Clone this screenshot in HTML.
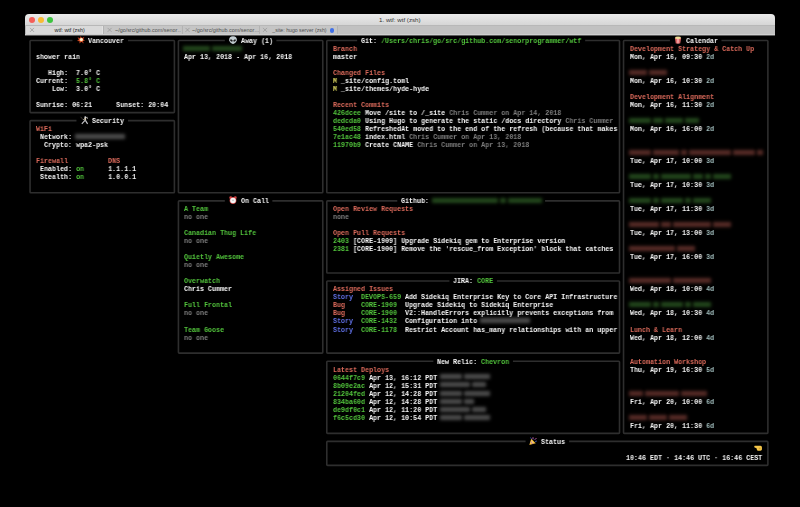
<!DOCTYPE html>
<html><head><meta charset="utf-8">
<style>
html,body{margin:0;padding:0;background:#000;width:800px;height:507px;overflow:hidden;position:relative}
.t{position:absolute;white-space:pre;font-family:"Liberation Mono",monospace;font-size:7.4px;font-weight:bold;line-height:8.017px;height:8.017px;transform:scale(0.90315,1.040);transform-origin:0 0;color:#ececec}
.b{position:absolute;background:#2e2e2e}
.bt{filter:blur(1.6px)}
.sm{position:absolute;height:5px}
.em{position:absolute;overflow:visible}
.t{will-change:transform}
#chrome{position:absolute;left:25px;top:14px;width:750px;height:22px}
#titlebar{position:absolute;left:0;top:0;width:750px;height:11px;background:linear-gradient(#ebebeb,#d6d6d6);border-radius:4px 4px 0 0}
#tabbar{position:absolute;left:0;top:11px;width:750px;height:10px;background:#c4c4c4;border-top:1px solid #b8b8b8;border-bottom:1px solid #cfcfcf;box-sizing:border-box}
.light{position:absolute;top:3px;width:6px;height:6px;border-radius:50%}
.tab{position:absolute;top:12px;height:8px;background:#c5c5c5;border-left:1px solid #b3b3b3;box-sizing:border-box;font-family:"Liberation Sans",sans-serif;font-size:5.4px;line-height:8px;color:#505050;white-space:pre;overflow:hidden}
.tab .x{position:absolute;left:4px;top:0;color:#8a8a8a;font-size:6px}
.tab .lbl{position:absolute;top:0}
</style></head><body>
<div id="chrome">
<div id="titlebar"></div>
<div class="light" style="left:4px;background:#f45e58"></div>
<div class="light" style="left:13px;background:#f8bb33"></div>
<div class="light" style="left:22px;background:#3cc43f"></div>
<div style="position:absolute;left:354px;top:0.4px;height:11px;line-height:11px;font-family:'Liberation Sans',sans-serif;font-size:6.2px;color:#333;white-space:pre">1. wtf: wtf (zsh)</div>
<div id="tabbar"></div>
<div class="tab" style="left:0;width:78px;background:#d9d9d9;border-right:1px solid #e2e2e2"><span class="lbl" style="left:28.5px;color:#222">wtf: wtf (zsh)</span></div>
<div class="tab" style="left:78px;width:78px"><span class="lbl" style="left:11px">~/go/src/github.com/senor…</span></div>
<div class="tab" style="left:157px;width:77px"><span class="lbl" style="left:9px">~/go/src/github.com/senor…</span></div>
<div class="tab" style="left:234px;width:78px"><span class="lbl" style="left:12.3px;font-size:5.2px">_site: hugo server (zsh)</span><span style="position:absolute;left:69.6px;top:2.2px;width:4.4px;height:4.4px;border-radius:50%;background:#3f6fe8"></span></div>
<div class="tab" style="left:312px;width:438px;background:#c1c1c1;border-left:1px solid #b3b3b3"></div>
<svg style="position:absolute;left:0;top:0" width="750" height="22"><g stroke="#8c8c8c" stroke-width="0.6">
<path d="M5,3 L9,7 M9,3 L5,7" transform="translate(0,10.9)"/>
<path d="M5,3 L9,7 M9,3 L5,7" transform="translate(77.6,10.9)"/>
<path d="M5,3 L9,7 M9,3 L5,7" transform="translate(155.5,10.9)"/>
<path d="M5,3 L9,7 M9,3 L5,7" transform="translate(233,10.9)"/>
</g></svg>
<div style="position:absolute;left:0;top:21px;width:750px;height:1px;background:#5c5c5c"></div>
</div>
<svg style="position:absolute;left:0;top:0" width="800" height="507"><g fill="none" stroke="#2e2e2e" stroke-width="1.6"><path d="M128.00,40.50 H173.61 Q174.41,40.50 174.41,41.30 V111.85 Q174.41,112.65 173.61,112.65 H30.85 Q30.05,112.65 30.05,111.85 V41.30 Q30.05,40.50 30.85,40.50 H72.46"/>
<path d="M128.00,120.67 H173.61 Q174.41,120.67 174.41,121.47 V192.02 Q174.41,192.82 173.61,192.82 H30.85 Q30.05,192.82 30.05,192.02 V121.47 Q30.05,120.67 30.85,120.67 H76.47"/>
<path d="M276.37,40.50 H321.98 Q322.78,40.50 322.78,41.30 V192.02 Q322.78,192.82 321.98,192.82 H179.22 Q178.42,192.82 178.42,192.02 V41.30 Q178.42,40.50 179.22,40.50 H224.84"/>
<path d="M272.36,200.84 H321.98 Q322.78,200.84 322.78,201.64 V352.36 Q322.78,353.16 321.98,353.16 H179.22 Q178.42,353.16 178.42,352.36 V201.64 Q178.42,200.84 179.22,200.84 H224.84"/>
<path d="M585.14,40.50 H618.72 Q619.52,40.50 619.52,41.30 V192.02 Q619.52,192.82 618.72,192.82 H327.59 Q326.79,192.82 326.79,192.02 V41.30 Q326.79,40.50 327.59,40.50 H357.17"/>
<path d="M545.04,200.84 H618.72 Q619.52,200.84 619.52,201.64 V272.19 Q619.52,272.99 618.72,272.99 H327.59 Q326.79,272.99 326.79,272.19 V201.64 Q326.79,200.84 327.59,200.84 H397.27"/>
<path d="M496.92,281.01 H618.72 Q619.52,281.01 619.52,281.81 V352.36 Q619.52,353.16 618.72,353.16 H327.59 Q326.79,353.16 326.79,352.36 V281.81 Q326.79,281.01 327.59,281.01 H449.40"/>
<path d="M512.96,361.18 H618.72 Q619.52,361.18 619.52,361.98 V432.53 Q619.52,433.33 618.72,433.33 H327.59 Q326.79,433.33 326.79,432.53 V361.98 Q326.79,361.18 327.59,361.18 H433.36"/>
<path d="M721.48,40.50 H767.09 Q767.89,40.50 767.89,41.30 V432.53 Q767.89,433.33 767.09,433.33 H624.33 Q623.53,433.33 623.53,432.53 V41.30 Q623.53,40.50 624.33,40.50 H669.95"/>
<path d="M569.10,441.35 H767.09 Q767.89,441.35 767.89,442.15 V464.60 Q767.89,465.40 767.09,465.40 H327.59 Q326.79,465.40 326.79,464.60 V442.15 Q326.79,441.35 327.59,441.35 H525.59"/></g></svg>
<div class="t" style="left:88.20px;top:36.89px"><span style="color:#f6f6f6">Vancouver</span></div>
<div class="t" style="left:92.21px;top:117.06px"><span style="color:#f6f6f6">Security</span></div>
<div class="t" style="left:240.58px;top:36.89px"><span style="color:#f6f6f6">Away (1)</span></div>
<div class="t" style="left:240.58px;top:197.23px"><span style="color:#f6f6f6">On Call</span></div>
<div class="t" style="left:360.88px;top:36.89px"><span style="color:#f6f6f6">Git: </span><span style="color:#52c43c">/Users/chris/go/src/github.com/senorprogrammer/wtf</span></div>
<div class="t" style="left:400.98px;top:197.23px"><span style="color:#f6f6f6">Github: </span><span style="color:#52c43c">                           </span></div>
<div class="t" style="left:453.11px;top:277.40px"><span style="color:#f6f6f6">JIRA: </span><span style="color:#52c43c">CORE</span></div>
<div class="t" style="left:437.07px;top:357.57px"><span style="color:#f6f6f6">New Relic: </span><span style="color:#52c43c">Chevron</span></div>
<div class="t" style="left:685.69px;top:36.89px"><span style="color:#f6f6f6">Calendar</span></div>
<div class="t" style="left:541.33px;top:437.74px"><span style="color:#f6f6f6">Status</span></div>
<div class="t" style="left:36.07px;top:52.92px"><span style="color:#f6f6f6">shower rain</span></div>
<div class="t" style="left:36.07px;top:68.96px"><span style="color:#f6f6f6">   High:  7.0° C</span></div>
<div class="t" style="left:36.07px;top:76.97px"><span style="color:#f6f6f6">Current:  </span><span style="color:#52c43c">5.8° C</span></div>
<div class="t" style="left:36.07px;top:84.99px"><span style="color:#f6f6f6">    Low:  3.0° C</span></div>
<div class="t" style="left:36.07px;top:101.03px"><span style="color:#f6f6f6">Sunrise: 06:21      Sunset: 20:04</span></div>
<div class="t" style="left:36.07px;top:125.08px"><span style="color:#db6a5b">WiFi</span></div>
<div class="t" style="left:40.08px;top:133.09px"><span style="color:#f6f6f6">Network:</span></div>
<div class="t" style="left:44.09px;top:141.11px"><span style="color:#f6f6f6">Crypto: wpa2-psk</span></div>
<div class="t" style="left:36.07px;top:157.14px"><span style="color:#db6a5b">Firewall</span><span style="color:#f6f6f6">          </span><span style="color:#db6a5b">DNS</span></div>
<div class="t" style="left:40.08px;top:165.16px"><span style="color:#f6f6f6">Enabled: </span><span style="color:#52c43c">on</span><span style="color:#f6f6f6">      1.1.1.1</span></div>
<div class="t" style="left:40.08px;top:173.18px"><span style="color:#f6f6f6">Stealth: </span><span style="color:#52c43c">on</span><span style="color:#f6f6f6">      1.0.0.1</span></div>
<div class="t" style="left:184.44px;top:52.92px"><span style="color:#f6f6f6">Apr 13, 2018 - Apr 16, 2018</span></div>
<div class="t" style="left:184.44px;top:205.25px"><span style="color:#52c43c">A Team</span></div>
<div class="t" style="left:184.44px;top:213.26px"><span style="color:#7e7e7e">no one</span></div>
<div class="t" style="left:184.44px;top:229.30px"><span style="color:#52c43c">Canadian Thug Life</span></div>
<div class="t" style="left:184.44px;top:237.31px"><span style="color:#7e7e7e">no one</span></div>
<div class="t" style="left:184.44px;top:253.35px"><span style="color:#52c43c">Quietly Awesome</span></div>
<div class="t" style="left:184.44px;top:261.37px"><span style="color:#7e7e7e">no one</span></div>
<div class="t" style="left:184.44px;top:277.40px"><span style="color:#52c43c">Overwatch</span></div>
<div class="t" style="left:184.44px;top:285.42px"><span style="color:#f6f6f6">Chris Cummer</span></div>
<div class="t" style="left:184.44px;top:301.45px"><span style="color:#52c43c">Full Frontal</span></div>
<div class="t" style="left:184.44px;top:309.47px"><span style="color:#7e7e7e">no one</span></div>
<div class="t" style="left:184.44px;top:325.50px"><span style="color:#52c43c">Team Goose</span></div>
<div class="t" style="left:184.44px;top:333.52px"><span style="color:#7e7e7e">no one</span></div>
<div class="t" style="left:332.81px;top:44.91px"><span style="color:#db6a5b">Branch</span></div>
<div class="t" style="left:332.81px;top:52.92px"><span style="color:#f6f6f6">master</span></div>
<div class="t" style="left:332.81px;top:68.96px"><span style="color:#db6a5b">Changed Files</span></div>
<div class="t" style="left:332.81px;top:76.97px"><span style="color:#d4cf5e">M</span><span style="color:#f6f6f6"> _site/config.toml</span></div>
<div class="t" style="left:332.81px;top:84.99px"><span style="color:#d4cf5e">M</span><span style="color:#f6f6f6"> _site/themes/hyde-hyde</span></div>
<div class="t" style="left:332.81px;top:101.03px"><span style="color:#db6a5b">Recent Commits</span></div>
<div class="t" style="left:332.81px;top:109.04px"><span style="color:#52c43c">426dcee</span><span style="color:#f6f6f6"> Move /site to /_site </span><span style="color:#7e7e7e">Chris Cummer on Apr 14, 2018</span></div>
<div class="t" style="left:332.81px;top:117.06px"><span style="color:#52c43c">dedcda0</span><span style="color:#f6f6f6"> Using Hugo to generate the static /docs directory </span><span style="color:#7e7e7e">Chris Cummer</span></div>
<div class="t" style="left:332.81px;top:125.08px"><span style="color:#52c43c">540ed58</span><span style="color:#f6f6f6"> RefreshedAt moved to the end of the refresh (because that makes</span></div>
<div class="t" style="left:332.81px;top:133.09px"><span style="color:#52c43c">7e1ac48</span><span style="color:#f6f6f6"> index.html </span><span style="color:#7e7e7e">Chris Cummer on Apr 13, 2018</span></div>
<div class="t" style="left:332.81px;top:141.11px"><span style="color:#52c43c">11970b9</span><span style="color:#f6f6f6"> Create CNAME </span><span style="color:#7e7e7e">Chris Cummer on Apr 13, 2018</span></div>
<div class="t" style="left:332.81px;top:205.25px"><span style="color:#db6a5b">Open Review Requests</span></div>
<div class="t" style="left:332.81px;top:213.26px"><span style="color:#7e7e7e">none</span></div>
<div class="t" style="left:332.81px;top:229.30px"><span style="color:#db6a5b">Open Pull Requests</span></div>
<div class="t" style="left:332.81px;top:237.31px"><span style="color:#52c43c">2403</span><span style="color:#f6f6f6"> [CORE-1909] Upgrade Sidekiq gem to Enterprise version</span></div>
<div class="t" style="left:332.81px;top:245.33px"><span style="color:#52c43c">2381</span><span style="color:#f6f6f6"> [CORE-1900] Remove the 'rescue_from Exception' block that catches</span></div>
<div class="t" style="left:332.81px;top:285.42px"><span style="color:#db6a5b">Assigned Issues</span></div>
<div class="t" style="left:332.81px;top:293.43px"><span style="color:#6070e6">Story</span></div>
<div class="t" style="left:360.88px;top:293.43px"><span style="color:#52c43c">DEVOPS-659</span></div>
<div class="t" style="left:404.99px;top:293.43px"><span style="color:#f6f6f6">Add Sidekiq Enterprise Key to Core API Infrastructure</span></div>
<div class="t" style="left:332.81px;top:301.45px"><span style="color:#db6a5b">Bug</span></div>
<div class="t" style="left:360.88px;top:301.45px"><span style="color:#52c43c">CORE-1909</span></div>
<div class="t" style="left:404.99px;top:301.45px"><span style="color:#f6f6f6">Upgrade Sidekiq to Sidekiq Enterprise</span></div>
<div class="t" style="left:332.81px;top:309.47px"><span style="color:#db6a5b">Bug</span></div>
<div class="t" style="left:360.88px;top:309.47px"><span style="color:#52c43c">CORE-1900</span></div>
<div class="t" style="left:404.99px;top:309.47px"><span style="color:#f6f6f6">V2::HandleErrors explicitly prevents exceptions from</span></div>
<div class="t" style="left:332.81px;top:317.48px"><span style="color:#6070e6">Story</span></div>
<div class="t" style="left:360.88px;top:317.48px"><span style="color:#52c43c">CORE-1432</span></div>
<div class="t" style="left:404.99px;top:317.48px"><span style="color:#f6f6f6">Configuration into</span></div>
<div class="t" style="left:332.81px;top:325.50px"><span style="color:#6070e6">Story</span></div>
<div class="t" style="left:360.88px;top:325.50px"><span style="color:#52c43c">CORE-1178</span></div>
<div class="t" style="left:404.99px;top:325.50px"><span style="color:#f6f6f6">Restrict Account has_many relationships with an upper</span></div>
<div class="t" style="left:332.81px;top:365.59px"><span style="color:#db6a5b">Latest Deploys</span></div>
<div class="t" style="left:332.81px;top:373.60px"><span style="color:#52c43c">0644f7c9</span><span style="color:#f6f6f6"> Apr 13, 16:12 PDT</span></div>
<div class="t" style="left:332.81px;top:381.62px"><span style="color:#52c43c">8b09e2ac</span><span style="color:#f6f6f6"> Apr 12, 15:31 PDT</span></div>
<div class="t" style="left:332.81px;top:389.64px"><span style="color:#52c43c">21204fed</span><span style="color:#f6f6f6"> Apr 12, 14:28 PDT</span></div>
<div class="t" style="left:332.81px;top:397.65px"><span style="color:#52c43c">834ba60d</span><span style="color:#f6f6f6"> Apr 12, 14:28 PDT</span></div>
<div class="t" style="left:332.81px;top:405.67px"><span style="color:#52c43c">de9df0c1</span><span style="color:#f6f6f6"> Apr 12, 11:20 PDT</span></div>
<div class="t" style="left:332.81px;top:413.69px"><span style="color:#52c43c">f6c5cd30</span><span style="color:#f6f6f6"> Apr 12, 10:54 PDT</span></div>
<div class="t" style="left:629.55px;top:44.91px"><span style="color:#db6a5b">Development Strategy &amp; Catch Up</span></div>
<div class="t" style="left:629.55px;top:52.92px"><span style="color:#f6f6f6">Mon, Apr 16, 09:30 </span><span style="color:#a0bcbc">2d</span></div>
<div class="t" style="left:629.55px;top:76.97px"><span style="color:#f6f6f6">Mon, Apr 16, 10:30 </span><span style="color:#a0bcbc">2d</span></div>
<div class="t" style="left:629.55px;top:93.01px"><span style="color:#db6a5b">Development Alignment</span></div>
<div class="t" style="left:629.55px;top:101.03px"><span style="color:#f6f6f6">Mon, Apr 16, 11:30 </span><span style="color:#a0bcbc">2d</span></div>
<div class="t" style="left:629.55px;top:125.08px"><span style="color:#f6f6f6">Mon, Apr 16, 16:00 </span><span style="color:#a0bcbc">2d</span></div>
<div class="t" style="left:629.55px;top:157.14px"><span style="color:#f6f6f6">Tue, Apr 17, 10:00 </span><span style="color:#a0bcbc">3d</span></div>
<div class="t" style="left:629.55px;top:181.20px"><span style="color:#f6f6f6">Tue, Apr 17, 10:30 </span><span style="color:#a0bcbc">3d</span></div>
<div class="t" style="left:629.55px;top:205.25px"><span style="color:#f6f6f6">Tue, Apr 17, 11:30 </span><span style="color:#a0bcbc">3d</span></div>
<div class="t" style="left:629.55px;top:229.30px"><span style="color:#f6f6f6">Tue, Apr 17, 13:00 </span><span style="color:#a0bcbc">3d</span></div>
<div class="t" style="left:629.55px;top:253.35px"><span style="color:#f6f6f6">Tue, Apr 17, 16:00 </span><span style="color:#a0bcbc">3d</span></div>
<div class="t" style="left:629.55px;top:285.42px"><span style="color:#f6f6f6">Wed, Apr 18, 10:00 </span><span style="color:#a0bcbc">4d</span></div>
<div class="t" style="left:629.55px;top:309.47px"><span style="color:#f6f6f6">Wed, Apr 18, 10:30 </span><span style="color:#a0bcbc">4d</span></div>
<div class="t" style="left:629.55px;top:325.50px"><span style="color:#db6a5b">Lunch &amp; Learn</span></div>
<div class="t" style="left:629.55px;top:333.52px"><span style="color:#f6f6f6">Wed, Apr 18, 12:00 </span><span style="color:#a0bcbc">4d</span></div>
<div class="t" style="left:629.55px;top:357.57px"><span style="color:#db6a5b">Automation Workshop</span></div>
<div class="t" style="left:629.55px;top:365.59px"><span style="color:#f6f6f6">Thu, Apr 19, 16:30 </span><span style="color:#a0bcbc">5d</span></div>
<div class="t" style="left:629.55px;top:397.65px"><span style="color:#f6f6f6">Fri, Apr 20, 10:00 </span><span style="color:#a0bcbc">6d</span></div>
<div class="t" style="left:629.55px;top:421.71px"><span style="color:#f6f6f6">Fri, Apr 20, 11:30 </span><span style="color:#a0bcbc">6d</span></div>
<div class="t" style="left:625.54px;top:453.77px"><span style="color:#f6f6f6">10:46 EDT · 14:46 UTC · 16:46 CEST</span></div>
<svg class="em" style="left:76.57px;top:36.00px" width="8" height="8" viewBox="0 0 8 8"><polygon points="3.6,0 4.8,2.2 7.4,0.8 6.2,3.2 8,4.4 5.8,5 6.8,7.6 4.4,5.8 2.4,7.4 2.6,5.2 0,5 1.8,3.4 0.6,1.2 3,2.2" fill="#c8401f"/><polygon points="4.2,1.4 5.6,2.8 6.6,4.2 5.2,5 4.2,6 3,5.2 1.8,4.2 2.8,2.8" fill="#e8703a"/><circle cx="4.4" cy="3.4" r="1.5" fill="#fff4d0"/></svg><svg class="em" style="left:80.18px;top:115.77px" width="8" height="8" viewBox="0 0 8 8"><path d="M0.6,0.8 L3.2,3.8" stroke="#5a5048" stroke-width="0.7"/><path d="M3,3.9 L5,2.6 M5.6,2 L7.2,1.2 L7.4,3" stroke="#b0aca8" stroke-width="0.8" fill="none"/><circle cx="5.3" cy="1.3" r="1" fill="#d8d8d8"/><path d="M5.2,2 L5.3,4.6" stroke="#d8ccb0" stroke-width="1.6"/><path d="M5,4.4 L1.8,7.8 M5.4,4.4 L7.6,7.8" stroke="#c4c4c8" stroke-width="1.2" fill="none"/></svg><svg class="em" style="left:228.55px;top:36.30px" width="8" height="8" viewBox="0 0 8 8"><path d="M4,0.3 C6.8,0.3 7.9,2 7.9,3.9 C7.9,5.6 5.2,7.9 4,7.9 C2.8,7.9 0.1,5.6 0.1,3.9 C0.1,2 1.2,0.3 4,0.3Z" fill="#c4ced2"/><ellipse cx="2.4" cy="4.5" rx="1.4" ry="1.0" transform="rotate(30 2.4 4.5)" fill="#1c1c1c"/><ellipse cx="5.6" cy="4.5" rx="1.4" ry="1.0" transform="rotate(-30 5.6 4.5)" fill="#1c1c1c"/></svg><svg class="em" style="left:228.55px;top:196.04px" width="8" height="8" viewBox="0 0 8 8"><circle cx="1.7" cy="1.7" r="1.4" fill="#d04444"/><circle cx="6.3" cy="1.7" r="1.4" fill="#d04444"/><circle cx="4" cy="4.5" r="3.4" fill="#d04444"/><circle cx="4" cy="4.5" r="2.8" fill="#f4f4f4"/><path d="M2.9,3.7 L4,4.7 L5.1,3.7" stroke="#888" stroke-width="0.5" fill="none"/></svg><svg class="em" style="left:673.66px;top:36.30px" width="8" height="8" viewBox="0 0 8 8"><path d="M0.9,2.1 L7.1,2.1 L6.2,7.6 L1.8,7.6Z" fill="#dc6464"/><path d="M2.8,2.1 L3.2,7.6 L4.8,7.6 L5.2,2.1Z" fill="#f0a0a0"/><ellipse cx="4" cy="1.8" rx="3" ry="1.2" fill="#eedd98"/></svg><svg class="em" style="left:529.30px;top:436.85px" width="8" height="8" viewBox="0 0 8 8"><path d="M0.3,8 L2.2,1.8 L6.8,6.2Z" fill="#f0b838"/><path d="M1.2,6.8 L2.4,3 L5.2,5.6Z" fill="#f8d060"/><circle cx="2.4" cy="5.2" r="0.6" fill="#b46ad0"/><circle cx="3.4" cy="6.6" r="0.5" fill="#b46ad0"/><path d="M1.5,0.5 L2.5,2 M4,0.3 L4,2.5 M7.5,1 L5.5,3 M8,4 L6,4.5" stroke="#3a4fa8" stroke-width="0.9"/><path d="M4,0.3 L4,2 M7.5,1 L6,2.6" stroke="#b03a5a" stroke-width="0.9"/></svg><svg class="em" style="left:753.66px;top:445.37px" width="8" height="6" viewBox="0 0 8 6.4"><path d="M0.6,0.9 L6.6,0.7 C7.6,0.7 8.2,1.5 8.2,2.6 L8.2,4.6 C8.2,5.5 7.5,6.1 6.6,6.1 L4.2,6.1 C3.4,6.1 2.9,5.2 2.6,4.2 L2.2,3.1 L0.8,2.9 C0.2,2.8 0,2.4 0,1.9 C0,1.3 0.2,0.9 0.6,0.9Z" fill="#f4c64a"/><ellipse cx="5.8" cy="3.5" rx="1" ry="0.9" fill="#d9a232"/></svg>
<div class="sm" style="left:-567.94px;top:198.09px;width:66.16px;box-shadow:1000px 0 3.6px 0 #24491d"></div>
<div class="sm" style="left:-499.77px;top:198.09px;width:6.01px;box-shadow:1000px 0 3.6px 0 #24491d"></div>
<div class="sm" style="left:-491.75px;top:198.09px;width:34.08px;box-shadow:1000px 0 3.6px 0 #24491d"></div>
<div class="sm" style="left:-924.83px;top:133.95px;width:50.12px;box-shadow:1000px 0 3.6px 0 #4f4f4f"></div>
<div class="sm" style="left:-816.56px;top:45.77px;width:26.06px;box-shadow:1000px 0 3.6px 0 #24491d"></div>
<div class="sm" style="left:-788.49px;top:45.77px;width:30.07px;box-shadow:1000px 0 3.6px 0 #24491d"></div>
<div class="sm" style="left:-519.82px;top:318.34px;width:50.12px;box-shadow:1000px 0 3.6px 0 #4f4f4f"></div>
<div class="sm" style="left:-559.92px;top:374.46px;width:22.05px;box-shadow:1000px 0 3.6px 0 #4f4f4f"></div>
<div class="sm" style="left:-535.86px;top:374.46px;width:26.06px;box-shadow:1000px 0 3.6px 0 #4f4f4f"></div>
<div class="sm" style="left:-559.92px;top:382.48px;width:30.07px;box-shadow:1000px 0 3.6px 0 #4f4f4f"></div>
<div class="sm" style="left:-527.84px;top:382.48px;width:14.03px;box-shadow:1000px 0 3.6px 0 #4f4f4f"></div>
<div class="sm" style="left:-559.92px;top:390.50px;width:22.05px;box-shadow:1000px 0 3.6px 0 #4f4f4f"></div>
<div class="sm" style="left:-535.86px;top:390.50px;width:26.06px;box-shadow:1000px 0 3.6px 0 #4f4f4f"></div>
<div class="sm" style="left:-559.92px;top:398.51px;width:22.05px;box-shadow:1000px 0 3.6px 0 #4f4f4f"></div>
<div class="sm" style="left:-535.86px;top:398.51px;width:10.02px;box-shadow:1000px 0 3.6px 0 #4f4f4f"></div>
<div class="sm" style="left:-559.92px;top:406.53px;width:30.07px;box-shadow:1000px 0 3.6px 0 #4f4f4f"></div>
<div class="sm" style="left:-527.84px;top:406.53px;width:14.03px;box-shadow:1000px 0 3.6px 0 #4f4f4f"></div>
<div class="sm" style="left:-559.92px;top:414.55px;width:22.05px;box-shadow:1000px 0 3.6px 0 #4f4f4f"></div>
<div class="sm" style="left:-535.86px;top:414.55px;width:26.06px;box-shadow:1000px 0 3.6px 0 #4f4f4f"></div>
<div class="sm" style="left:-371.45px;top:69.82px;width:18.04px;box-shadow:1000px 0 3.6px 0 #5a2d28"></div>
<div class="sm" style="left:-351.40px;top:69.82px;width:18.04px;box-shadow:1000px 0 3.6px 0 #5a2d28"></div>
<div class="sm" style="left:-371.45px;top:117.92px;width:22.05px;box-shadow:1000px 0 3.6px 0 #24491d"></div>
<div class="sm" style="left:-347.39px;top:117.92px;width:10.02px;box-shadow:1000px 0 3.6px 0 #24491d"></div>
<div class="sm" style="left:-335.36px;top:117.92px;width:18.04px;box-shadow:1000px 0 3.6px 0 #24491d"></div>
<div class="sm" style="left:-315.31px;top:117.92px;width:14.03px;box-shadow:1000px 0 3.6px 0 #24491d"></div>
<div class="sm" style="left:-371.45px;top:149.99px;width:22.05px;box-shadow:1000px 0 3.6px 0 #5a2d28"></div>
<div class="sm" style="left:-347.39px;top:149.99px;width:26.06px;box-shadow:1000px 0 3.6px 0 #5a2d28"></div>
<div class="sm" style="left:-319.32px;top:149.99px;width:6.01px;box-shadow:1000px 0 3.6px 0 #5a2d28"></div>
<div class="sm" style="left:-311.30px;top:149.99px;width:42.10px;box-shadow:1000px 0 3.6px 0 #5a2d28"></div>
<div class="sm" style="left:-267.19px;top:149.99px;width:22.05px;box-shadow:1000px 0 3.6px 0 #5a2d28"></div>
<div class="sm" style="left:-243.13px;top:149.99px;width:6.01px;box-shadow:1000px 0 3.6px 0 #5a2d28"></div>
<div class="sm" style="left:-371.45px;top:174.04px;width:22.05px;box-shadow:1000px 0 3.6px 0 #24491d"></div>
<div class="sm" style="left:-347.39px;top:174.04px;width:6.01px;box-shadow:1000px 0 3.6px 0 #24491d"></div>
<div class="sm" style="left:-339.37px;top:174.04px;width:30.07px;box-shadow:1000px 0 3.6px 0 #24491d"></div>
<div class="sm" style="left:-307.29px;top:174.04px;width:10.02px;box-shadow:1000px 0 3.6px 0 #24491d"></div>
<div class="sm" style="left:-295.26px;top:174.04px;width:6.01px;box-shadow:1000px 0 3.6px 0 #24491d"></div>
<div class="sm" style="left:-287.24px;top:174.04px;width:18.04px;box-shadow:1000px 0 3.6px 0 #24491d"></div>
<div class="sm" style="left:-371.45px;top:198.09px;width:22.05px;box-shadow:1000px 0 3.6px 0 #24491d"></div>
<div class="sm" style="left:-347.39px;top:198.09px;width:6.01px;box-shadow:1000px 0 3.6px 0 #24491d"></div>
<div class="sm" style="left:-339.37px;top:198.09px;width:22.05px;box-shadow:1000px 0 3.6px 0 #24491d"></div>
<div class="sm" style="left:-315.31px;top:198.09px;width:6.01px;box-shadow:1000px 0 3.6px 0 #24491d"></div>
<div class="sm" style="left:-307.29px;top:198.09px;width:18.04px;box-shadow:1000px 0 3.6px 0 #24491d"></div>
<div class="sm" style="left:-371.45px;top:222.14px;width:30.07px;box-shadow:1000px 0 3.6px 0 #5a2d28"></div>
<div class="sm" style="left:-339.37px;top:222.14px;width:10.02px;box-shadow:1000px 0 3.6px 0 #5a2d28"></div>
<div class="sm" style="left:-327.34px;top:222.14px;width:38.09px;box-shadow:1000px 0 3.6px 0 #5a2d28"></div>
<div class="sm" style="left:-287.24px;top:222.14px;width:18.04px;box-shadow:1000px 0 3.6px 0 #5a2d28"></div>
<div class="sm" style="left:-371.45px;top:246.19px;width:46.11px;box-shadow:1000px 0 3.6px 0 #5a2d28"></div>
<div class="sm" style="left:-323.33px;top:246.19px;width:18.04px;box-shadow:1000px 0 3.6px 0 #5a2d28"></div>
<div class="sm" style="left:-371.45px;top:278.26px;width:42.10px;box-shadow:1000px 0 3.6px 0 #5a2d28"></div>
<div class="sm" style="left:-327.34px;top:278.26px;width:38.09px;box-shadow:1000px 0 3.6px 0 #5a2d28"></div>
<div class="sm" style="left:-371.45px;top:302.31px;width:22.05px;box-shadow:1000px 0 3.6px 0 #24491d"></div>
<div class="sm" style="left:-347.39px;top:302.31px;width:6.01px;box-shadow:1000px 0 3.6px 0 #24491d"></div>
<div class="sm" style="left:-339.37px;top:302.31px;width:22.05px;box-shadow:1000px 0 3.6px 0 #24491d"></div>
<div class="sm" style="left:-315.31px;top:302.31px;width:6.01px;box-shadow:1000px 0 3.6px 0 #24491d"></div>
<div class="sm" style="left:-307.29px;top:302.31px;width:18.04px;box-shadow:1000px 0 3.6px 0 #24491d"></div>
<div class="sm" style="left:-371.45px;top:390.50px;width:14.03px;box-shadow:1000px 0 3.6px 0 #5a2d28"></div>
<div class="sm" style="left:-355.41px;top:390.50px;width:34.08px;box-shadow:1000px 0 3.6px 0 #5a2d28"></div>
<div class="sm" style="left:-319.32px;top:390.50px;width:26.06px;box-shadow:1000px 0 3.6px 0 #5a2d28"></div>
<div class="sm" style="left:-371.45px;top:414.55px;width:18.04px;box-shadow:1000px 0 3.6px 0 #5a2d28"></div>
<div class="sm" style="left:-351.40px;top:414.55px;width:18.04px;box-shadow:1000px 0 3.6px 0 #5a2d28"></div>
<div class="sm" style="left:-331.35px;top:414.55px;width:18.04px;box-shadow:1000px 0 3.6px 0 #5a2d28"></div>
</body></html>
